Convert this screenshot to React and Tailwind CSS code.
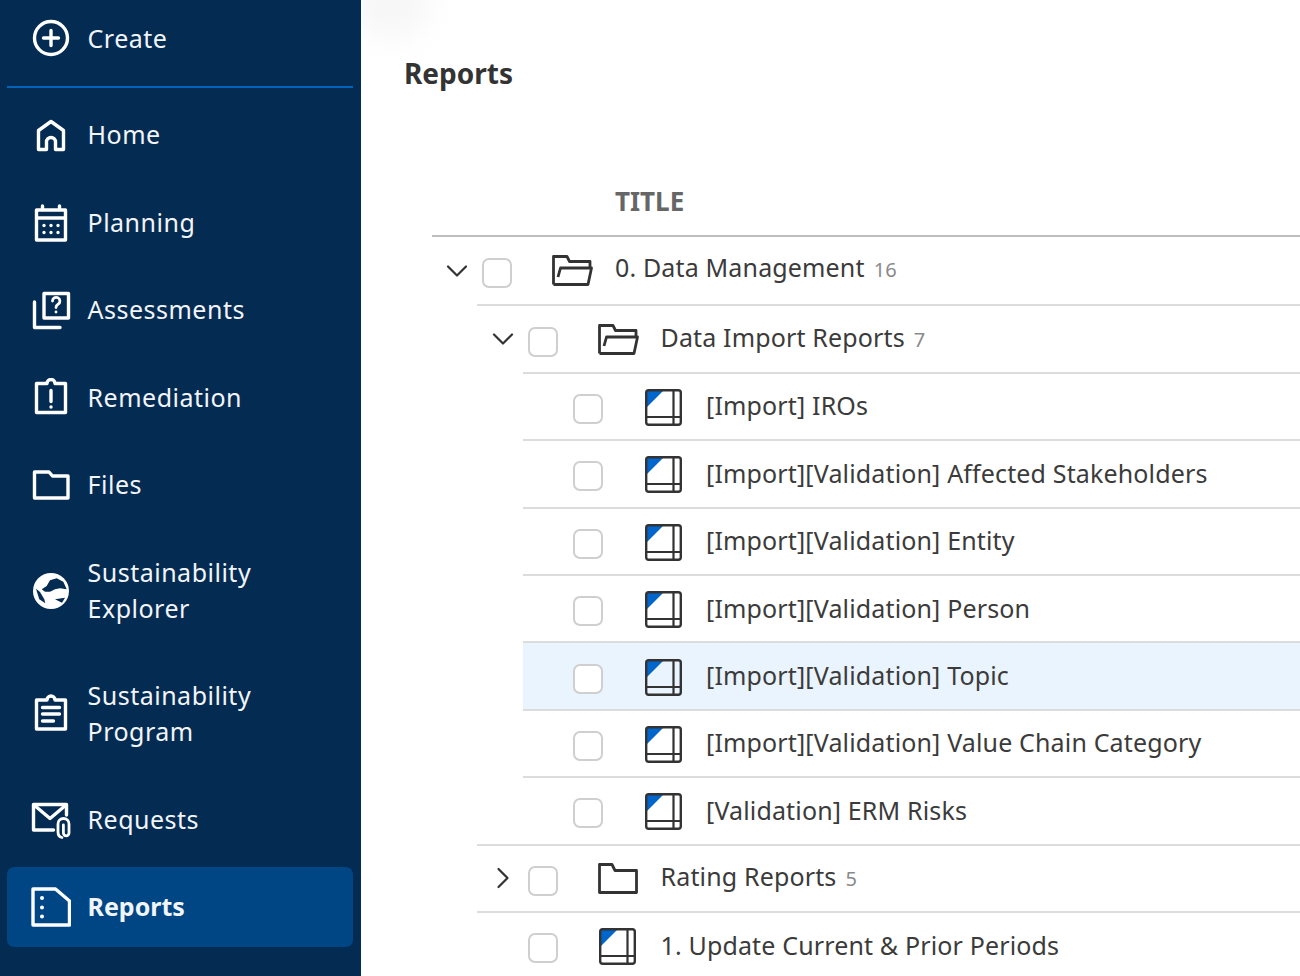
import React from 'react';

const font = 'font-["Noto_Sans",sans-serif]';

function Icon({ children }) {
    return (
        <svg width="40" height="40" viewBox="0 0 40 40" fill="none" stroke="white" strokeWidth="3.4" strokeLinejoin="round" strokeLinecap="round" className="shrink-0">
            {children}
        </svg>
    );
}

const CreateIcon = () => (
    <Icon>
        <circle cx="20" cy="20" r="16.500" />
        <path d="M20 12.500v15M12.500 20h15" />
    </Icon>
);
const HomeIcon = () => (
    <Icon>
        <path d="M20 6.500 7.500 15.500V34.500h8V27a4.500 4.500 0 0 1 9 0v7.500h8V15.500z" />
    </Icon>
);
const PlanningIcon = () => (
    <Icon>
        <path d="M5.500 7h29v30h-29zM5.500 15h29M11.500 3v4M28.500 3v4" />
        <path d="M13 22.500h.01M20 22.500h.01M27 22.500h.01M13 29.500h.01M20 29.500h.01M27 29.500h.01" />
    </Icon>
);
const AssessmentsIcon = () => (
    <Icon>
        <path d="M13 3.500h24.500V28H13z" />
        <path d="M3.500 12v25.500H29" />
        <path d="M21.500 11a3.700 3.700 0 1 1 5.500 3.300c-1.500.9-2 1.500-2 3.200M25 22h.01" strokeWidth="2.800" />
    </Icon>
);
const RemediationIcon = () => (
    <Icon>
        <path d="M5.500 5.500H16a4 4 0 0 1 8 0h10.500v29H5.500z" />
        <path d="M20 12.500v11M20 29h.01" />
    </Icon>
);
const FilesIcon = () => (
    <Icon>
        <path d="M3.500 7H18l3.500 4H37v22H3.500z" />
    </Icon>
);
const GlobeIcon = () => (
    <svg width="40" height="40" viewBox="0 0 40 40" className="shrink-0">
        <circle cx="20" cy="20" r="18" fill="white" />
        <path d="M10.700 18.300 15.700 15 19 9.300l6.700-2 6.600 3.400 3.400 7.600-6.700-1-5 1-5 2.400h-5z" fill="#042b52" />
        <path d="M5 17.700 9 21l4.300 7.300 1 4-6-4z" fill="#042b52" />
        <path d="M24 28.300 34 26.700l-3 5z" fill="#042b52" />
    </svg>
);
const ProgramIcon = () => (
    <Icon>
        <path d="M5.500 6H16a4 4 0 0 1 8 0h10.500v29H5.500z" />
        <path d="M11.500 13.500h17M11.500 20h17M11.500 27h11" />
    </Icon>
);
const RequestsIcon = () => (
    <Icon>
        <path d="M22.500 30H2.500V4.500H35.500V15" />
        <path d="M3 5 19 18.500 35 5" />
        <path d="M31 37.500C28.500 37 27 35 27 32V24a5.500 5.500 0 0 1 11 0v9a2.800 2.800 0 0 1-5.600 0V25" strokeWidth="2.800" />
    </Icon>
);
const ReportsIcon = () => (
    <Icon>
        <path d="M2 2h22.500L38.500 14v24H2z" />
        <path d="M11 11h.01M11 20.500h.01M11 29.500h.01" strokeWidth="4" />
    </Icon>
);

const navItems = [
    { label: ['Home'], icon: <HomeIcon /> },
    { label: ['Planning'], icon: <PlanningIcon /> },
    { label: ['Assessments'], icon: <AssessmentsIcon /> },
    { label: ['Remediation'], icon: <RemediationIcon /> },
    { label: ['Files'], icon: <FilesIcon /> },
    { label: ['Sustainability', 'Explorer'], icon: <GlobeIcon /> },
    { label: ['Sustainability', 'Program'], icon: <ProgramIcon /> },
    { label: ['Requests'], icon: <RequestsIcon /> },
    { label: ['Reports'], icon: <ReportsIcon />, active: true },
];

function NavItem({ item }) {
    const height = item.label.length > 1 ? 'h-[116px]' : 'h-[80px]';
    return (
        <div className={`flex items-center gap-[16.5px] pl-[24px] rounded-[7px] ${height} ${item.active ? 'bg-[#004685] font-bold' : ''}`}>
            {item.icon}
            <div className={`mb-[2px] text-[25px] leading-[36px] ${item.active ? 'tracking-normal' : 'tracking-[0.5px]'}`}>
                {item.label.map((line) => <div key={line}>{line}</div>)}
            </div>
        </div>
    );
}

function Sidebar() {
    return (
        <div className="w-[361px] h-[976px] shrink-0 bg-[#042b52] text-[#f2f5f8] px-[7px] overflow-hidden">
            <div className="flex items-center gap-[16.5px] pl-[24px] h-[76px]">
                <CreateIcon />
                <div className="text-[25px] leading-[36px] tracking-[0.5px]">Create</div>
            </div>
            <div className="mt-[10px] h-[2px] w-[346px] bg-[#0062b8]"></div>
            <div className="mt-[7px] flex flex-col gap-[7.5px] w-[346px]">
                {navItems.map((item) => <NavItem key={item.label.join(' ')} item={item} />)}
            </div>
        </div>
    );
}

function Chevron({ open }) {
    return (
        <svg width="22" height="22" viewBox="0 0 22 22" fill="none" stroke="#333" strokeWidth="2.200" strokeLinecap="round" strokeLinejoin="round">
            {open ? <path d="M2 6.500 11 15.500 20 6.500" /> : <path d="M6.500 2 15.500 11 6.500 20" />}
        </svg>
    );
}

const OpenFolder = () => (
    <svg width="41" height="31" viewBox="0 0 41 31" fill="none" stroke="#333" strokeWidth="2.800" strokeLinejoin="round">
        <path d="M1.500 29.500V1.500H15L17.500 6.500H38V12" />
        <path d="M6 22 8.500 13H39.500L36 29.500H1.500" />
    </svg>
);

const ClosedFolder = () => (
    <svg width="41" height="31" viewBox="0 0 41 31" fill="none" stroke="#333" strokeWidth="2.800" strokeLinejoin="round">
        <path d="M1.500 1.500H14L17 7.500H38.500V29.500H1.500Z" />
    </svg>
);

const ReportIcon = () => (
    <svg width="37" height="37" viewBox="0 0 37 37" className="ml-[1.500px] mt-[2px]" fill="none">
        <path d="M1 2.500 2.500 1H19L1 19z" fill="#0066cc" />
        <rect x="1.200" y="1.200" width="34.600" height="34.600" rx="2.500" stroke="#333" strokeWidth="2.400" />
        <path d="M28.500 1v35M1 28h35" stroke="#333" strokeWidth="2.200" />
    </svg>
);

const icons = {
    open: <OpenFolder />,
    closed: <ClosedFolder />,
    report: <ReportIcon />,
};

const rows = [
    { indent: 'pl-0', height: 'h-[67.4px]', textGap: 'mb-[4px]', lineIndent: 'ml-[45px]', toggle: 'open', icon: 'open', title: '0. Data Management', count: 16 },
    { indent: 'pl-[45.5px]', lineIndent: 'ml-[91px]', toggle: 'open', icon: 'open', title: 'Data Import Reports', count: 7 },
    { indent: 'pl-[141px]', lineIndent: 'ml-[91px]', icon: 'report', title: '[Import] IROs' },
    { indent: 'pl-[141px]', lineIndent: 'ml-[91px]', icon: 'report', title: '[Import][Validation] Affected Stakeholders' },
    { indent: 'pl-[141px]', lineIndent: 'ml-[91px]', icon: 'report', title: '[Import][Validation] Entity' },
    { indent: 'pl-[141px]', lineIndent: 'ml-[91px]', icon: 'report', title: '[Import][Validation] Person' },
    { indent: 'pl-[141px]', lineIndent: 'ml-[91px]', icon: 'report', title: '[Import][Validation] Topic', selected: true },
    { indent: 'pl-[141px]', lineIndent: 'ml-[91px]', icon: 'report', title: '[Import][Validation] Value Chain Category' },
    { indent: 'pl-[141px]', lineIndent: 'ml-[45px]', icon: 'report', title: '[Validation] ERM Risks' },
    { indent: 'pl-[45.5px]', lineIndent: 'ml-[45px]', toggle: 'closed', icon: 'closed', title: 'Rating Reports', count: 5 },
    { indent: 'pl-[95.5px]', lineIndent: 'ml-[45px]', icon: 'report', title: '1. Update Current & Prior Periods' },
];

function Row({ row }) {
    return (
        <div>
            <div className={`relative flex items-center ${row.height || 'h-[65.4px]'} ${row.indent}`}>
                {row.selected && <div className="absolute left-[91px] right-0 top-0 bottom-0 bg-[#eaf4fe]"></div>}
                {row.toggle && (
                    <div className="relative w-[50px] flex justify-center">
                        <Chevron open={row.toggle === 'open'} />
                    </div>
                )}
                <div className="relative w-[30px] h-[30px] shrink-0 mt-[5px] rounded-[7px] border-2 border-[#cfcfcf] bg-white"></div>
                <div className="relative ml-[40px] w-[63px] shrink-0 flex items-center">{icons[row.icon]}</div>
                <div className={`relative ${row.textGap || 'mb-[2px]'} text-[25px] leading-[36px] tracking-[0.15px] text-[#3b3b3b] whitespace-nowrap`}>
                    {row.title}
                    {row.count && <span className="ml-[9px] text-[20px] text-[#8a8a8a]">{row.count}</span>}
                </div>
            </div>
            <div className={`relative h-[2px] bg-[#dcdcdc] ${row.lineIndent}`}></div>
        </div>
    );
}

export default function App() {
    return (
        <div className={`flex w-[1300px] h-[976px] overflow-hidden bg-white ${font}`}>
            <Sidebar />
            <div className="relative flex-1 min-w-0 overflow-hidden">
                <div className="absolute -left-[10px] -top-[40px] w-[80px] h-[80px] rounded-full bg-[#f7f7f7] blur-[14px]"></div>
                <h1 className="relative mt-[53px] ml-[43px] text-[28px] leading-[40px] font-bold text-[#333]">Reports</h1>
                <div className="relative mt-[75px] ml-[71px]">
                    <div className="h-[69px] flex items-center pl-[183px] border-b-2 border-[#bdbdbd] text-[26px] font-bold text-[#666]">
                        TITLE
                    </div>
                    {rows.map((row) => <Row key={row.title} row={row} />)}
                </div>
            </div>
        </div>
    );
}
